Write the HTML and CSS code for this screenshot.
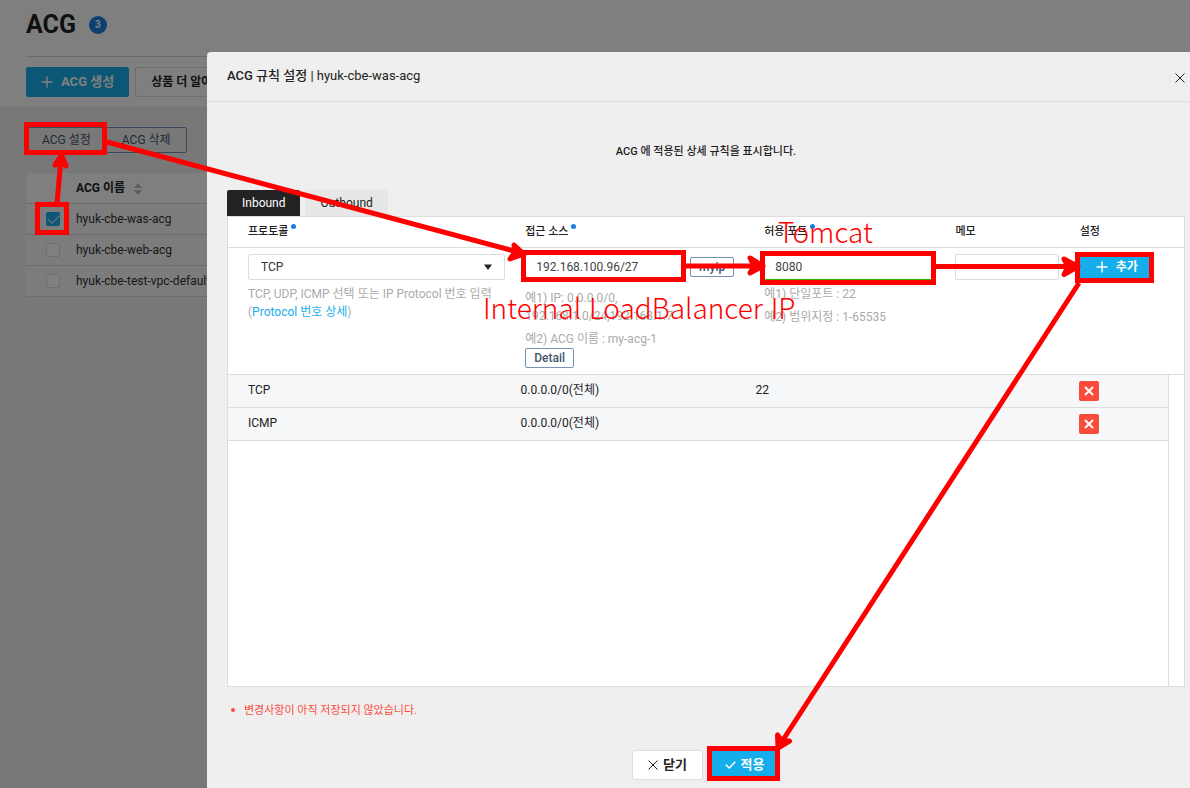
FILE: index.html
```
<!DOCTYPE html>
<html lang="ko">
<head>
    <meta charset="UTF-8">
    <meta name="viewport" content="width=device-width, initial-scale=1.0">
    <title>ACG</title>
    <link rel="stylesheet" href="styles.css">
</head>
<body>
    <div class="page">
        <header class="page-header">
            <div class="page-title">
                <h1>ACG</h1>
                <span class="count">3</span>
            </div>
            <div class="page-actions">
                <button class="btn btn-primary btn-create">
                    <svg width="12" height="12" viewBox="0 0 12 12"><path d="M6 0.5v11M0.5 6h11"/></svg>
                    ACG 생성
                </button>
                <button class="btn btn-more">상품 더 알아보기</button>
            </div>
        </header>
        <main class="page-body">
            <div class="toolbar">
                <button class="btn-outline">ACG 설정</button>
                <button class="btn-outline">ACG 삭제</button>
            </div>
            <table class="acg-table">
                <thead>
                    <tr>
                        <th class="check-col"></th>
                        <th>ACG 이름 <svg class="sort" width="8" height="12" viewBox="0 0 8 12"><path d="M4 0l4 5H0zM4 12l4-5H0z"/></svg></th>
                    </tr>
                </thead>
                <tbody>
                    <tr>
                        <td class="check-col"><input type="checkbox" id="acg1" checked></td>
                        <td><label for="acg1">hyuk-cbe-was-acg</label></td>
                    </tr>
                    <tr>
                        <td class="check-col"><input type="checkbox" id="acg2"></td>
                        <td><label for="acg2">hyuk-cbe-web-acg</label></td>
                    </tr>
                    <tr>
                        <td class="check-col"><input type="checkbox" id="acg3"></td>
                        <td><label for="acg3">hyuk-cbe-test-vpc-default-acg</label></td>
                    </tr>
                </tbody>
            </table>
        </main>
    </div>

    <div class="backdrop"></div>

    <section class="modal" role="dialog" aria-labelledby="modalTitle">
        <div class="modal-header">
            <h2 id="modalTitle">ACG 규칙 설정 <span>| hyuk-cbe-was-acg</span></h2>
            <button class="close" aria-label="닫기">
                <svg width="10" height="10" viewBox="0 0 10 10"><path d="M0.5 0.5l9 9M9.5 0.5l-9 9"/></svg>
            </button>
        </div>
        <div class="modal-body">
            <p class="desc">ACG 에 적용된 상세 규칙을 표시합니다.</p>
            <div class="tabs">
                <button class="tab active">Inbound</button>
                <button class="tab">Outbound</button>
            </div>
            <div class="panel">
                <table class="rules">
                    <colgroup>
                        <col class="col-protocol"><col class="col-source"><col class="col-port"><col class="col-memo"><col class="col-action">
                    </colgroup>
                    <thead>
                        <tr>
                            <th><label class="required" for="protocol">프로토콜</label></th>
                            <th><label class="required" for="source">접근 소스</label></th>
                            <th><label class="required" for="port">허용 포트</label></th>
                            <th><label for="memo">메모</label></th>
                            <th>설정</th>
                        </tr>
                    </thead>
                    <tbody>
                        <tr class="form-row">
                            <td>
                                <div class="select-box">
                                    <select id="protocol">
                                        <option>TCP</option>
                                        <option>UDP</option>
                                        <option>ICMP</option>
                                    </select>
                                    <svg class="caret" width="8" height="6" viewBox="0 0 8 6"><path d="M0 0.5h8L4 6z"/></svg>
                                </div>
                                <p class="help">TCP, UDP, ICMP 선택 또는 IP Protocol 번호 입력<br>(<a href="#">Protocol 번호 상세</a>)</p>
                            </td>
                            <td>
                                <div class="source-box">
                                    <input type="text" id="source" value="192.168.100.96/27">
                                    <button class="btn-small">myip</button>
                                </div>
                                <p class="help help-source">예1) IP: 0.0.0.0/0,<br>192.168.1.0/24,192.168.1.7</p>
                                <p class="help">예2) ACG 이름 : my-acg-1</p>
                                <button class="btn-small">Detail</button>
                            </td>
                            <td>
                                <input type="text" id="port" class="valid" value="8080">
                                <p class="help help-port">예1) 단일포트 : 22<br>예2) 범위지정 : 1-65535</p>
                            </td>
                            <td><input type="text" id="memo"></td>
                            <td>
                                <button class="btn btn-primary btn-add">
                                    <svg width="12" height="12" viewBox="0 0 12 12"><path d="M6 0.5v11M0.5 6h11"/></svg>
                                    추가
                                </button>
                            </td>
                        </tr>
                    </tbody>
                </table>
                <div class="rule-list">
                    <div class="rule-scroll">
                        <table class="rules">
                            <colgroup>
                                <col class="col-protocol"><col class="col-source"><col class="col-port"><col class="col-memo"><col class="col-action">
                            </colgroup>
                            <tbody>
                                <tr class="rule">
                                    <td>TCP</td>
                                    <td>0.0.0.0/0(전체)</td>
                                    <td>22</td>
                                    <td></td>
                                    <td><button class="delete" aria-label="삭제"><svg width="10" height="10" viewBox="0 0 10 10"><path d="M1 1l8 8M9 1l-8 8"/></svg></button></td>
                                </tr>
                                <tr class="rule">
                                    <td>ICMP</td>
                                    <td>0.0.0.0/0(전체)</td>
                                    <td></td>
                                    <td></td>
                                    <td><button class="delete" aria-label="삭제"><svg width="10" height="10" viewBox="0 0 10 10"><path d="M1 1l8 8M9 1l-8 8"/></svg></button></td>
                                </tr>
                            </tbody>
                        </table>
                    </div>
                </div>
            </div>
            <p class="warning">변경사항이 아직 저장되지 않았습니다.</p>
            <div class="modal-actions">
                <button class="btn btn-cancel">
                    <svg width="10" height="10" viewBox="0 0 10 10"><path d="M0.5 0.5l9 9M9.5 0.5l-9 9"/></svg>
                    닫기
                </button>
                <button class="btn btn-primary btn-apply">
                    <svg width="11" height="8" viewBox="0 0 11 8"><path d="M0.7 3.5l3.5 3.5L10.3 0.8"/></svg>
                    적용
                </button>
            </div>
        </div>
    </section>

    <!-- walkthrough marks -->
    <div class="guide">
        <svg width="1190" height="788" viewBox="0 0 1190 788">
            <rect x="26.5" y="124.5" width="78" height="28"/>
            <rect x="37.5" y="204.5" width="29" height="28"/>
            <rect x="523.5" y="252.5" width="160" height="27"/>
            <rect x="762.5" y="253.5" width="171" height="29"/>
            <rect x="1077.5" y="254.5" width="74" height="26"/>
            <rect x="709.5" y="748.5" width="68" height="30"/>
            <path d="M57 204L61 158M107 142L518 252M686 266H758M936 266.5H1072M1079 283L781 743"/>
            <path class="head" d="M55 165L61.5 155L66 166L60.5 162Z"/>
            <path class="head" d="M514 245L524 254L510 259L515 252Z"/>
            <path class="head" d="M750 258L763 266L750 273L754 266Z"/>
            <path class="head" d="M1064 259L1078 266.5L1064 274.5L1068 266.5Z"/>
            <path class="head" d="M777.5 735L778 748L789.500 741L782 741Z"/>
        </svg>
        <span class="note note-port">Tomcat</span>
        <span class="note note-source">Internal LoadBalancer IP</span>
    </div>
</body>
</html>
```
FILE: styles.css
```
* {
    box-sizing: border-box;
    margin: 0;
    padding: 0;
}

body {
    font-family: Roboto, "Noto Sans CJK KR", sans-serif;
    font-size: 12px;
    line-height: 18px;
    color: #222;
    background-color: #f0f0f0;
    height: 100vh;
    overflow: hidden;
}

button, input, select {
    font-family: inherit;
    font-size: 12px;
    line-height: 18px;
    color: inherit;
}

button {
    cursor: pointer;
}

svg {
    fill: none;
    stroke: currentColor;
}

.page-header {
    height: 107px;
    padding: 10px 26px;
    background-color: #fff;
}

.page-title {
    display: flex;
    align-items: center;
    gap: 13px;
    height: 47px;
    padding-bottom: 17px;
    border-bottom: 1px solid #d5d5d5;
}

h1 {
    font-size: 25px;
    line-height: 30px;
    font-weight: 700;
}

.count {
    width: 18px;
    height: 18px;
    border-radius: 50%;
    background-color: #1a7ee0;
    color: #fff;
    font-size: 10px;
    font-weight: 700;
    text-align: center;
}

.page-actions {
    display: flex;
    gap: 6px;
    padding-top: 10px;
}

.btn {
    display: flex;
    align-items: center;
    justify-content: center;
    gap: 8px;
    height: 30px;
    border: 1px solid #ddd;
    border-radius: 2px;
    background-color: #fff;
    font-size: 13px;
    font-weight: 700;
}

.btn-primary {
    background-color: #16aeea;
    border-color: #16aeea;
    color: #fff;
}

.btn-primary svg {
    stroke-width: 1.5;
}

.btn-create {
    padding: 0 14px;
}

.btn-more {
    padding: 0 15px;
    font-size: 12px;
}

.page-body {
    padding: 20px 26px;
}

.toolbar {
    display: flex;
}

.btn-outline {
    height: 26px;
    padding: 0 15px;
    border: 1px solid #7790b5;
    border-radius: 2px;
    background: none;
    color: #44546e;
}

.btn-outline + .btn-outline {
    margin-left: -1px;
}

.acg-table {
    width: 100%;
    margin-top: 20px;
    border-spacing: 0;
    background-color: #f8f8f8;
    color: #333;
}

.acg-table th,
.acg-table td {
    height: 31px;
    text-align: left;
    border-bottom: 1px solid #d8d8d8;
}

.acg-table th {
    background-color: #fff;
    color: #222;
}

.acg-table .check-col {
    width: 50px;
    padding-left: 20px;
}

.sort {
    margin-left: 6px;
    vertical-align: -3px;
    fill: #bbb;
    stroke: none;
}

input[type="checkbox"] {
    display: block;
    appearance: none;
    width: 14px;
    height: 14px;
    border: 1px solid #ddd;
    border-radius: 2px;
    background-color: #fff;
}

input[type="checkbox"]:checked {
    background-color: #16aeea;
    border-color: #16aeea;
}

input[type="checkbox"]:checked::before {
    content: "";
    display: block;
    width: 10px;
    height: 6px;
    margin: 1px;
    border: solid #fff;
    border-width: 0 0 1px 1px;
    transform: rotate(-45deg);
}

.backdrop {
    position: fixed;
    inset: 0;
    background-color: rgba(0, 0, 0, 0.5);
}

.modal {
    position: fixed;
    top: 52px;
    right: 0;
    bottom: 0;
    left: 207px;
    background-color: #efefef;
    border-top-left-radius: 4px;
}

.modal-header {
    display: flex;
    align-items: center;
    justify-content: space-between;
    height: 50px;
    padding: 0 5px 2px 20px;
    border-bottom: 1px solid #ddd;
}

h2 {
    font-size: 13px;
    font-weight: 500;
}

h2 span {
    font-weight: 400;
}

.close {
    display: flex;
    padding-top: 4px;
    border: none;
    background: none;
}

.modal-body {
    padding: 41px 5px 0 20px;
}

.desc {
    font-size: 11px;
    font-weight: 500;
    text-align: center;
}

.tabs {
    display: flex;
    gap: 5px;
    margin-top: 29px;
}

.tab {
    height: 26px;
    padding: 0 15px;
    border: none;
    border-radius: 2px 2px 0 0;
    background-color: #e7e7e7;
}

.tab.active {
    background-color: #222;
    color: #fff;
}

.panel {
    border: 1px solid #ddd;
    background-color: #fff;
}

.rules {
    width: 100%;
    table-layout: fixed;
    border-spacing: 0;
}

.col-protocol {
    width: 29%;
}

.col-source {
    width: 25%;
}

.col-port {
    width: 20%;
}

.col-memo,
.col-action {
    width: 13%;
}

.rules th,
.rules td {
    padding-left: 20px;
    text-align: left;
    border-bottom: 1px solid #ddd;
}

.rules th {
    height: 31px;
    font-size: 11px;
    font-weight: 500;
}

.required::after {
    content: "";
    display: inline-block;
    width: 5px;
    height: 5px;
    margin-left: 3px;
    border-radius: 50%;
    background-color: #1a7ee0;
    vertical-align: 6px;
}

.form-row td {
    height: 127px;
    padding-top: 6px;
    vertical-align: top;
}

.select-box {
    position: relative;
}

select,
input[type="text"] {
    width: 100%;
    height: 26px;
    padding: 0 10px;
    border: 1px solid #ddd;
    border-radius: 2px;
    background-color: #fff;
    color: #444;
}

select {
    appearance: none;
    padding: 0 12px;
    color: #333;
}

.caret {
    position: absolute;
    top: 10px;
    right: 13px;
    fill: #222;
    stroke: none;
}

.source-box {
    display: flex;
    align-items: center;
    gap: 4px;
    margin-right: 10px;
}

input.valid {
    width: 170px;
    border-bottom-color: #2db400;
}

#memo {
    width: 104px;
}

.help {
    padding-top: 5px;
    color: #aaa;
}

.help a {
    color: #16aeea;
    text-decoration: none;
}

.help-source {
    padding-top: 9px;
}

.help-port {
    line-height: 23px;
    padding-top: 3px;
}

.btn-small {
    height: 20px;
    padding: 0 8px;
    border: 1px solid #7790b5;
    border-radius: 2px;
    background-color: #fff;
    color: #44546e;
    font-weight: 500;
}

.btn-add {
    width: 74px;
    height: 26px;
    font-size: 12px;
}

.rule-list {
    height: 311px;
    padding-right: 15px;
}

.rule-scroll {
    height: 100%;
    overflow-y: auto;
    border-right: 1px solid #ddd;
}

.rule td {
    height: 33px;
    padding-bottom: 2px;
    background-color: #f6f7f9;
}

.rule td:last-child {
    padding-bottom: 0;
}

.delete {
    display: flex;
    align-items: center;
    justify-content: center;
    width: 20px;
    height: 20px;
    margin-left: 13px;
    border: none;
    border-radius: 2px;
    background-color: #fb4b3b;
    color: #fff;
    stroke-width: 2;
}

.warning {
    padding: 15px 4px;
    font-size: 11px;
    color: #fb4b3b;
}

.warning::before {
    content: "";
    display: inline-block;
    width: 4px;
    height: 4px;
    margin-right: 9px;
    border-radius: 50%;
    background-color: #fb4b3b;
    vertical-align: 2px;
}

.modal-actions {
    display: flex;
    justify-content: center;
    gap: 6px;
    padding-top: 15px;
}

.btn-cancel,
.btn-apply {
    width: 71px;
    gap: 5px;
}

.guide {
    position: fixed;
    top: 0;
    left: 0;
    color: #f00;
    pointer-events: none;
}

.guide svg {
    display: block;
    stroke-width: 5;
}

.guide .head {
    fill: #f00;
    stroke-linejoin: round;
}

.note {
    position: absolute;
    font-family: "Noto Sans CJK KR", sans-serif;
    font-size: 28px;
    font-weight: 300;
    line-height: 32px;
    white-space: nowrap;
}

.note-port {
    top: 215px;
    left: 778px;
}

.note-source {
    top: 291px;
    left: 483px;
}
```
